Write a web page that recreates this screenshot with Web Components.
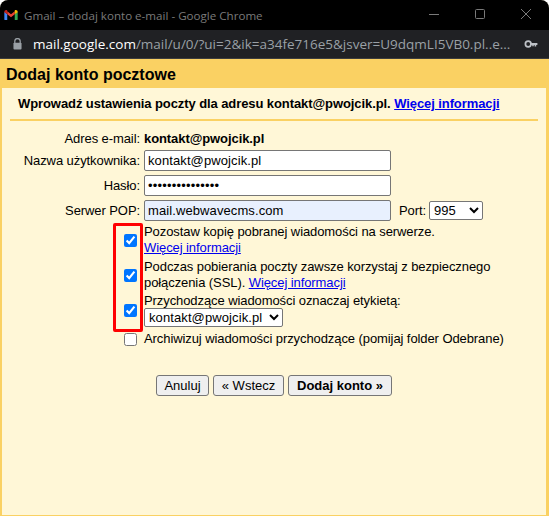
<!DOCTYPE html>
<html lang="pl">
<head>
<meta charset="utf-8">
<title>Gmail – dodaj konto e-mail</title>
<style>
  html, body { margin: 0; background: #fff; }
  body { width: 549px; height: 516px; overflow: hidden; font-family: "Liberation Sans", Arial, sans-serif; }
</style>
</head>
<body>
<popup-window>
  <window-titlebar slot="chrome">Gmail – dodaj konto e-mail - Google Chrome</window-titlebar>
  <address-bar slot="chrome" host-name="mail.google.com" rest="/mail/u/0/?ui=2&amp;ik=a34fe716e5&amp;jsver=U9dqmLI5VB0.pl..e..."></address-bar>
  <mail-dialog heading="Dodaj konto pocztowe">
    <span slot="intro">Wprowadź ustawienia poczty dla adresu kontakt@pwojcik.pl. <a href="#">Więcej informacji</a></span>
    <form-row compact label="Adres e-mail:"><b>kontakt@pwojcik.pl</b></form-row>
    <form-row label="Nazwa użytkownika:"><text-box value="kontakt@pwojcik.pl"></text-box></form-row>
    <form-row label="Hasło:"><text-box type="password" value="kontakt12345678"></text-box></form-row>
    <form-row label="Serwer POP:"><text-box value="mail.webwavecms.com" autofilled></text-box><port-select></port-select></form-row>
    <check-group>
      <check-row checked gap="3">Pozostaw kopię pobranej wiadomości na serwerze.<br><a href="#">Więcej informacji</a></check-row>
      <check-row checked gap="2">Podczas pobierania poczty zawsze korzystaj z bezpiecznego połączenia (SSL). <a href="#">Więcej informacji</a></check-row>
      <check-row checked>Przychodzące wiadomości oznaczaj etykietą:<br><label-select></label-select></check-row>
    </check-group>
    <check-row>Archiwizuj wiadomości przychodzące (pomijaj folder Odebrane)</check-row>
    <dialog-actions></dialog-actions>
  </mail-dialog>
</popup-window>

<script>
const FONT = '13px "Liberation Sans", Arial, sans-serif';

function shadow(el, html) {
  el.attachShadow({ mode: "open" }).innerHTML = html;
}

class PopupWindow extends HTMLElement {
  constructor() {
    super();
    shadow(this, `
    <style>
      :host { display: flex; flex-direction: column; width: 549px; height: 516px; background: #fff7d7; border-radius: 8px 8px 0 0; overflow: hidden; }
    </style>
    <slot name="chrome"></slot>
    <slot></slot>`);
  }
}

class WindowTitlebar extends HTMLElement {
  constructor() {
    super();
    shadow(this, `
    <style>
      :host { display: flex; align-items: center; height: 30px; background: #000; color: #7a7a7a; font: 11.6px "Open Sans", sans-serif; }
      .logo { width: 14px; height: 10px; margin: 0 6px 0 4px; flex: none; }
      .title { flex: 1; white-space: nowrap; }
      .btns { display: flex; }
      .btns svg { width: 46px; height: 12px; display: block; }
    </style>
    <svg class="logo" viewBox="0 0 16 12">
      <path d="M0 2v9a1 1 0 0 0 1 1h2.500V5z" fill="#4285f4"/>
      <path d="M16 2v9a1 1 0 0 1-1 1h-2.500V5z" fill="#34a853"/>
      <path d="M3.500 5.200V1.600L8 5l4.500-3.400v3.600L8 8.600z" fill="#ea4335"/>
      <path d="M0 2.300C0 .5 2 -.5 3.500 .6V5.200L0 2.600z" fill="#c5221f"/>
      <path d="M16 2.300C16 .5 14 -.5 12.500 .6V5.200L16 2.600z" fill="#fbbc04"/>
    </svg>
    <span class="title"><slot></slot></span>
    <div class="btns">
      <svg viewBox="0 0 46 12"><path d="M18 5.500h10" stroke="#7a7a7a" fill="none"/></svg>
      <svg viewBox="0 0 46 12"><rect x="18.500" y="0.500" width="9" height="9" rx="1" stroke="#7a7a7a" fill="none"/></svg>
      <svg viewBox="0 0 46 12"><path d="M18 0l10 10M28 0L18 10" stroke="#7a7a7a" fill="none"/></svg>
    </div>`);
  }
}

class AddressBar extends HTMLElement {
  constructor() {
    super();
    shadow(this, `
    <style>
      :host { display: flex; align-items: center; height: 29px; box-sizing: border-box; background: #202124; color: #9aa0a6; font: 13.5px "Open Sans", sans-serif; border-bottom: 1px solid #3c3c3c; white-space: nowrap; }
      .lock { width: 9px; height: 12px; margin: 0 11px 0 13px; flex: none; }
      b { color: #fff; font-weight: 400; }
      .url { flex: 1; min-width: 0; }
      .key { width: 14px; height: 8px; margin-right: 11px; flex: none; }
    </style>
    <svg class="lock" viewBox="0 0 10 13"><path d="M2 5.500V3.500a3 3 0 0 1 6 0v2" stroke="#9aa0a6" stroke-width="1.400" fill="none"/><rect x="0.500" y="5" width="9" height="7.500" rx="1" fill="#9aa0a6"/></svg>
    <span class="url"><b></b><span class="rest"></span></span>
    <svg class="key" viewBox="0 0 16 10"><circle cx="4.500" cy="5" r="3.500" fill="none" stroke="#bdc1c6" stroke-width="2.200"/><path d="M8 3.800h8v2.400h-1.500v2h-2v-2h-1v1.500H9.500V6.200H8z" fill="#bdc1c6"/></svg>`);
  }
  connectedCallback() {
    this.shadowRoot.querySelector("b").textContent = this.getAttribute("host-name");
    this.shadowRoot.querySelector(".rest").textContent = this.getAttribute("rest");
  }
}

class MailDialog extends HTMLElement {
  constructor() {
    super();
    shadow(this, `
    <style>
      :host { display: flex; flex-direction: column; flex: 1; min-height: 0; box-sizing: border-box; background: #fad163; padding: 0 3px 1px 2px; font-size: 13px; letter-spacing: -0.085px; color: #000; }
      h1 { margin: 0; height: 29px; padding: 7px 0 0 4px; box-sizing: border-box; font-size: 16px; line-height: 18px; letter-spacing: 0; }
      .panel { flex: 1; background: #fff7d7; padding: 0 8px; display: flex; flex-direction: column; }
      .intro { height: 33px; flex: none; box-sizing: border-box; padding: 8px 0 0 8px; border-bottom: 2px solid #fad163; font-weight: 700; line-height: 16px; white-space: nowrap; }
      .rows { padding-top: 9px; display: flex; flex-direction: column; }
    </style>
    <h1></h1>
    <div class="panel">
      <div class="intro"><slot name="intro"></slot></div>
      <div class="rows"><slot></slot></div>
    </div>`);
  }
  connectedCallback() {
    this.shadowRoot.querySelector("h1").textContent = this.getAttribute("heading");
  }
}

class FormRow extends HTMLElement {
  constructor() {
    super();
    shadow(this, `
    <style>
      :host { display: grid; grid-template-columns: 130px 1fr; column-gap: 4px; align-items: center; margin-bottom: 4px; min-height: 21px; }
      :host([compact]) { min-height: 17px; margin-bottom: 3px; }
      .label { text-align: right; white-space: nowrap; }
      .value { display: flex; align-items: center; gap: 8px; }
    </style>
    <div class="label"></div>
    <div class="value"><slot></slot></div>`);
  }
  connectedCallback() {
    this.shadowRoot.querySelector(".label").textContent = this.getAttribute("label");
  }
}

class TextBox extends HTMLElement {
  constructor() {
    super();
    shadow(this, `
    <style>
      :host { display: block; }
      input { display: block; width: 247px; height: 21px; box-sizing: border-box; padding: 1px 3px; margin: 0; font: ${FONT}; letter-spacing: 0.1px; color: #000; background: #fff; border: 1px solid #767676; border-radius: 2px; outline: none; }
      input[type=password] { letter-spacing: 0.2px; }
      input.auto { background: #e8f0fe; }
    </style>
    <input>`);
  }
  connectedCallback() {
    const box = this.shadowRoot.querySelector("input");
    box.type = this.getAttribute("type") || "text";
    box.value = this.getAttribute("value") || "";
    box.classList.toggle("auto", this.hasAttribute("autofilled"));
  }
}

class PortSelect extends HTMLElement {
  constructor() {
    super();
    shadow(this, `
    <style>
      :host { display: flex; align-items: center; gap: 3px; }
      select { width: 54px; height: 19px; font: ${FONT}; background: #fff; color: #000; border: 1px solid #767676; border-radius: 2px; padding: 0; margin: 0; }
    </style>
    <span>Port:</span>
    <select><option>995</option><option>110</option></select>`);
  }
}

class LabelSelect extends HTMLElement {
  constructor() {
    super();
    shadow(this, `
    <style>
      :host { display: inline-block; vertical-align: top; margin-top: -1px; }
      select { display: block; width: 139px; height: 19px; font: ${FONT}; letter-spacing: 0.1px; background: #fff; color: #000; border: 1px solid #767676; border-radius: 2px; padding: 0; margin: 0; }
    </style>
    <select><option>kontakt@pwojcik.pl</option></select>`);
  }
}

class CheckGroup extends HTMLElement {
  constructor() {
    super();
    // the red frame lies over the three checkboxes
    shadow(this, `
    <style>
      :host { display: block; position: relative; margin-top: -2px; padding-top: 1px; }
      .mark { position: absolute; left: 103px; top: 0; width: 30px; height: 109px; box-sizing: border-box; border: 3px solid #f00; border-radius: 2px; pointer-events: none; }
    </style>
    <slot></slot>
    <div class="mark"></div>`);
  }
}

class CheckRow extends HTMLElement {
  constructor() {
    super();
    shadow(this, `
    <style>
      :host { display: grid; grid-template-columns: 13px 1fr; column-gap: 7px; align-items: center; padding-left: 114px; line-height: 16px; margin-bottom: 4px; }
      input { margin: 0; width: 13px; height: 13px; accent-color: #0075ff; }
    </style>
    <input type="checkbox">
    <div><slot></slot></div>`);
  }
  connectedCallback() {
    this.shadowRoot.querySelector("input").checked = this.hasAttribute("checked");
    if (this.hasAttribute("gap")) this.style.marginBottom = this.getAttribute("gap") + "px";
  }
}

class DialogActions extends HTMLElement {
  constructor() {
    super();
    shadow(this, `
    <style>
      :host { display: flex; gap: 4px; margin: 24px 0 0 146px; }
      button { height: 21px; box-sizing: border-box; padding: 0; font: ${FONT}; color: #000; background: #efefef; border: 1px solid #767676; border-radius: 3px; margin: 0; }
      .cancel { width: 53px; }
      .back { width: 71px; }
      .go { width: 104px; font-weight: 700; }
    </style>
    <button class="cancel">Anuluj</button>
    <button class="back">« Wstecz</button>
    <button class="go">Dodaj konto »</button>`);
  }
}

customElements.define("popup-window", PopupWindow);
customElements.define("window-titlebar", WindowTitlebar);
customElements.define("address-bar", AddressBar);
customElements.define("mail-dialog", MailDialog);
customElements.define("form-row", FormRow);
customElements.define("text-box", TextBox);
customElements.define("port-select", PortSelect);
customElements.define("label-select", LabelSelect);
customElements.define("check-group", CheckGroup);
customElements.define("check-row", CheckRow);
customElements.define("dialog-actions", DialogActions);
</script>
</body>
</html>
